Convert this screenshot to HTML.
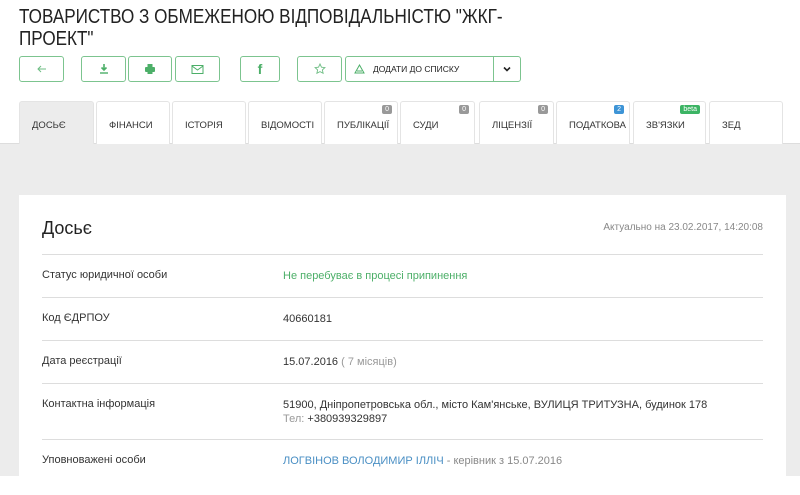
<!DOCTYPE html>
<html><head><meta charset="utf-8"><style>
*{box-sizing:border-box;margin:0;padding:0}
body{width:800px;height:476px;overflow:hidden;background:#fff;font-family:"Liberation Sans",sans-serif;position:relative;color:#333}
h1{position:absolute;left:19px;top:6px;font-size:20px;font-weight:normal;line-height:22px;color:#222;white-space:nowrap;transform:scaleX(0.855);transform-origin:0 0}
.btn{position:absolute;top:56px;height:26px;border:1px solid #7cc48f;border-radius:3px;background:#fff;display:flex;align-items:center;justify-content:center;color:#4caf68}
.tab{position:absolute;top:101px;height:43px;border:1px solid #e4e4e4;border-bottom:none;border-radius:3px 3px 0 0;background:#fff;font-size:9.5px;color:#333;padding-left:12px;line-height:48px}
.tab.act{background:#ececec}
.badge{position:absolute;right:5px;top:3px;font-size:7px;line-height:9px;padding:0 3px;border-radius:2px;color:#fff;background:#999}
.grey{position:absolute;left:0;top:143px;width:800px;height:333px;background:#ececec;border-top:1px solid #ddd}
.card{position:absolute;left:19px;top:195px;width:767px;height:300px;background:#fff}
.row{position:absolute;left:23px;width:721px;border-top:1px solid #ddd;font-size:11px}
.row .l{position:absolute;left:0;color:#333}
.row .v{position:absolute;left:241px;color:#333;line-height:14px}
</style></head><body>
<h1>ТОВАРИСТВО З ОБМЕЖЕНОЮ ВІДПОВІДАЛЬНІСТЮ "ЖКГ-<br>ПРОЕКТ"</h1>
<div class="btn" style="left:19px;width:45px"><svg width="12" height="12" viewBox="0 0 12 12"><path d="M10 6H2M5 3L2 6l3 3" fill="none" stroke="#6dbd83" stroke-width="1"/></svg></div>
<div class="btn" style="left:81px;width:45px"><svg width="12" height="12" viewBox="0 0 12 12"><path d="M6 1v6M3.5 4.5L6 7l2.5-2.5" fill="none" stroke="#4caf68" stroke-width="1.6"/><path d="M2 10h8" stroke="#4caf68" stroke-width="1.4"/></svg></div>
<div class="btn" style="left:128px;width:44px"><svg width="12" height="12" viewBox="0 0 12 12"><rect x="3.5" y="1" width="5" height="3" fill="#4caf68"/><rect x="1" y="4" width="10" height="5" rx="1" fill="#4caf68"/><rect x="3.5" y="8" width="5" height="3" fill="#4caf68"/></svg></div>
<div class="btn" style="left:175px;width:45px"><svg width="13" height="11" viewBox="0 0 13 11"><rect x="1" y="1.5" width="11" height="8" fill="none" stroke="#4caf68"/><path d="M1 2l5.5 4L12 2" fill="none" stroke="#4caf68"/></svg></div>
<div class="btn" style="left:240px;width:40px;font-weight:bold;font-size:14px">f</div>
<div class="btn" style="left:297px;width:45px"><svg width="12" height="12" viewBox="0 0 12 12"><path d="M6 1l1.5 3.2 3.4.4-2.5 2.3.7 3.4L6 8.6 2.9 10.3l.7-3.4L1.1 4.6l3.4-.4z" fill="none" stroke="#6dbd83" stroke-width=".9"/></svg></div>
<div class="btn" style="left:345px;width:149px;justify-content:flex-start;padding-left:8px;font-size:8.5px;color:#222;border-radius:3px 0 0 3px"><svg width="11" height="10" viewBox="0 0 11 10" style="margin-right:8px"><path d="M5.5 1L10 9H1z" fill="none" stroke="#4caf68"/><path d="M3 7h5" stroke="#4caf68"/></svg>ДОДАТИ ДО СПИСКУ</div>
<div class="btn" style="left:493px;width:28px;border-radius:0 3px 3px 0"><svg width="10" height="8" viewBox="0 0 10 8"><path d="M2 2.5l3 3 3-3" fill="none" stroke="#222" stroke-width="1.6"/></svg></div>
<div class="grey"></div>
<div class="tab act" style="left:19px;width:75px">ДОСЬЄ</div>
<div class="tab" style="left:96px;width:74px">ФІНАНСИ</div>
<div class="tab" style="left:172px;width:74px">ІСТОРІЯ</div>
<div class="tab" style="left:248px;width:74px">ВІДОМОСТІ</div>
<div class="tab" style="left:324px;width:74px">ПУБЛІКАЦІЇ<span class="badge">0</span></div>
<div class="tab" style="left:400px;width:75px">СУДИ<span class="badge">0</span></div>
<div class="tab" style="left:479px;width:75px">ЛІЦЕНЗІЇ<span class="badge">0</span></div>
<div class="tab" style="left:556px;width:74px">ПОДАТКОВА<span class="badge" style="background:#3d94d6">2</span></div>
<div class="tab" style="left:633px;width:73px">ЗВ'ЯЗКИ<span class="badge" style="background:#3cb464">beta</span></div>
<div class="tab" style="left:709px;width:74px">ЗЕД</div>
<div class="card">
<div style="position:absolute;left:23px;top:23px;font-size:18px;color:#222">Досьє</div>
<div style="position:absolute;right:23px;top:27px;font-size:10px;color:#888">Актуально на 23.02.2017, 14:20:08</div>
<div class="row" style="top:59px;height:43px"><span class="l" style="top:14px">Статус юридичної особи</span><span class="v" style="top:14px;color:#4caf68">Не перебуває в процесі припинення</span></div>
<div class="row" style="top:102px;height:43px"><span class="l" style="top:14px">Код ЄДРПОУ</span><span class="v" style="top:14px">40660181</span></div>
<div class="row" style="top:145px;height:43px"><span class="l" style="top:14px">Дата реєстрації</span><span class="v" style="top:14px">15.07.2016 <span style="color:#999">( 7 місяців)</span></span></div>
<div class="row" style="top:188px;height:56px"><span class="l" style="top:14px">Контактна інформація</span><span class="v" style="top:14px">51900, Дніпропетровська обл., місто Кам'янське, ВУЛИЦЯ ТРИТУЗНА, будинок 178<br><span style="color:#999">Тел:</span> +380939329897</span></div>
<div class="row" style="top:244px;height:50px"><span class="l" style="top:14px">Уповноважені особи</span><span class="v" style="top:14px"><span style="color:#4a8fc4">ЛОГВІНОВ ВОЛОДИМИР ІЛЛІЧ</span> <span style="color:#888">- керівник з 15.07.2016</span></span></div>
</div>
</body></html>
